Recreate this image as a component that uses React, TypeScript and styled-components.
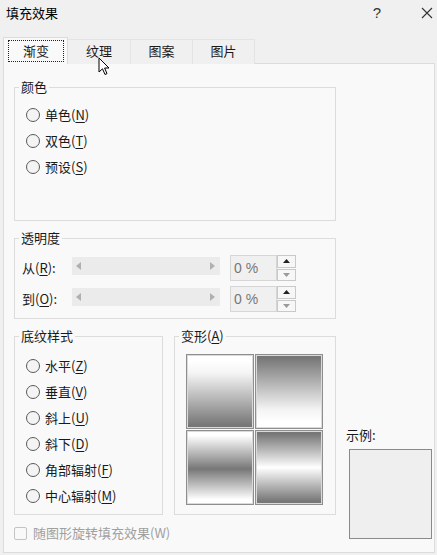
import React from 'react'
import styled, { createGlobalStyle } from 'styled-components'

const GlobalStyle = createGlobalStyle`
	html, body {
		margin: 0;
		background: #f0f0f0;
	}
	body {
		font-family: "Noto Sans CJK SC", "Liberation Sans", sans-serif;
		font-size: 13px;
		color: #1a1a1a;
	}
`

const Window = styled.div`
	position: relative;
	width: 437px;
	height: 555px;
	display: flex;
	flex-direction: column;
	box-sizing: border-box;
	padding: 0 2px 2px 3px;
	overflow: hidden;
`

const TitleBar = styled.div`
	flex-shrink: 0;
	height: 25px;
	display: flex;
	align-items: center;
	padding-left: 3px;
	margin-left: -3px;
	margin-right: -2px;
	line-height: 18px;

	.title {
		flex: 1;
		padding-left: 3px;
		color: #000;
	}
`

const TitleButton = styled.span<{ $gap?: number }>`
	width: 20px;
	height: 20px;
	display: flex;
	align-items: center;
	justify-content: center;
	margin-right: ${p => p.$gap ?? 0}px;
	font-family: "Liberation Sans", sans-serif;
	font-size: 15px;
	color: #333;
`

const TabStrip = styled.div`
	flex-shrink: 0;
	margin-top: 12px;
	height: 27px;
	display: flex;
	align-items: flex-end;
	position: relative;
	z-index: 1;
`

const Tab = styled.div<{ $width: number; $active?: boolean }>`
	box-sizing: border-box;
	width: ${p => p.$width}px;
	height: ${p => (p.$active ? 27 : 25)}px;
	display: flex;
	align-items: stretch;
	background: ${p => (p.$active ? '#f9f9f9' : '#f0f0f0')};
	border: 1px solid ${p => (p.$active ? '#dcdcdc' : '#e4e4e4')};
	border-bottom: none;
	border-left: ${p => (p.$active ? '1px solid #dcdcdc' : 'none')};
	padding: ${p => (p.$active ? '2px 3px 2px 4px' : '0 0 1px')};
	line-height: 18px;
`

const TabLabel = styled.span<{ $focus?: boolean }>`
	flex: 1;
	display: flex;
	align-items: center;
	justify-content: center;
	border: 1px dotted ${p => (p.$focus ? '#222' : 'transparent')};
	padding-bottom: 1px;
`

const Panel = styled.div`
	flex: 1;
	min-height: 0;
	margin-top: -1px;
	box-sizing: border-box;
	background: #f9f9f9;
	border: 1px solid #dcdcdc;
	display: grid;
	grid-template-columns: 322px 86px;
	column-gap: 10px;
	padding: 14px 0 0 10px;
`

const LeftColumn = styled.div`
	display: flex;
	flex-direction: column;
`

const Group = styled.fieldset<{ $width: number; $height: number }>`
	box-sizing: border-box;
	width: ${p => p.$width}px;
	height: ${p => p.$height}px;
	margin: 0;
	padding: 0;
	border: 1px solid #dcdcdc;
	min-width: 0;

	legend {
		margin-left: 4px;
		padding: 0 2px;
		line-height: 18px;
	}
`

const GroupBody = styled.div<{ $pad: string }>`
	padding: ${p => p.$pad};
	display: flex;
	flex-direction: column;
`

const RadioRow = styled.label`
	height: 26px;
	display: flex;
	align-items: center;
	gap: 5px;
	line-height: 18px;
`

const RadioCircle = styled.span`
	box-sizing: border-box;
	width: 14px;
	height: 14px;
	border-radius: 50%;
	border: 1px solid #5a5a5a;
	background: #f4f4f4;
`

const Key = styled.u`
	text-underline-offset: 2px;
`

const TransRows = styled.div`
	display: grid;
	grid-template-columns: 50px 148px 76px;
	grid-auto-rows: 28px;
	row-gap: 3px;
	align-items: center;

	> :nth-child(3n) {
		margin-left: 10px;
	}
`

const RowLabel = styled.span`
	line-height: 18px;
	padding-top: 2px;
`

const Track = styled.div`
	height: 18px;
	background: #ebebeb;
	display: flex;
	align-items: center;
	justify-content: space-between;
	padding: 0 5px 0 4px;
	margin-top: -3px;
`

const Spin = styled.div`
	height: 26px;
	display: flex;
	margin-top: 2px;
`

const SpinValue = styled.div`
	flex: 1;
	border: 1px solid #d6d6d6;
	background: #f0f0f0;
	display: flex;
	align-items: center;
	padding-left: 3px;
	font-family: "Liberation Sans", sans-serif;
	font-size: 14px;
	color: #777;
`

const SpinButtons = styled.div`
	width: 19px;
	display: flex;
	flex-direction: column;
	gap: 1px;
`

const SpinButton = styled.div`
	flex: 1;
	border: 1px solid #c9c9c9;
	background: #f7f7f7;
	display: flex;
	align-items: center;
	justify-content: center;
`

const BottomRow = styled.div`
	display: flex;
	gap: 11px;
	margin-top: 8px;
`

const TileGrid = styled.div`
	display: grid;
	grid-template-columns: 68px 68px;
	grid-template-rows: 75px 75px;
	gap: 1px;
`

const Tile = styled.div<{ $gradient: string }>`
	box-sizing: border-box;
	border: 1px solid #8e8e8e;
	box-shadow: inset 0 0 0 1px #dadada;
	background: ${p => p.$gradient};
`

const CheckRow = styled.label`
	margin-top: 9px;
	display: flex;
	align-items: center;
	gap: 6px;
	color: #a0a0a0;
	line-height: 18px;
`

const CheckBox = styled.span`
	box-sizing: border-box;
	width: 13px;
	height: 13px;
	border: 1px solid #c4c4c4;
	border-radius: 2px;
	background: #f9f9f9;
`

const RightColumn = styled.div`
	display: flex;
	flex-direction: column;
	justify-content: flex-end;
	line-height: 18px;
	padding-bottom: 13px;
`

const Sample = styled.div`
	margin: 5px 0 0 3px;
	width: 83px;
	height: 90px;
	box-sizing: border-box;
	border: 1px solid #8a8a8a;
	background: #efefef;
`

const Cursor = styled.svg`
	position: absolute;
	left: 98px;
	top: 57px;
	z-index: 5;
`

const Arrow = ({ dir, color }: { dir: 'left' | 'right' | 'up' | 'down'; color: string }) => {
	const paths = {
		left: 'M5 0 L5 8 L0 4 Z',
		right: 'M0 0 L0 8 L5 4 Z',
		up: 'M0 4 L7 4 L3.5 0 Z',
		down: 'M0 0 L7 0 L3.5 4 Z'
	}
	const horizontal = dir === 'left' || dir === 'right'
	return (
		<svg width={horizontal ? 5 : 7} height={horizontal ? 8 : 4} viewBox={horizontal ? '0 0 5 8' : '0 0 7 4'}>
			<path d={paths[dir]} fill={color} />
		</svg>
	)
}

const Radio = ({ label, k }: { label: string; k: string }) => (
	<RadioRow>
		<RadioCircle />
		<span>{label}(<Key>{k}</Key>)</span>
	</RadioRow>
)

const SpinField = () => (
	<Spin>
		<SpinValue>0 %</SpinValue>
		<SpinButtons>
			<SpinButton><Arrow dir='up' color='#222' /></SpinButton>
			<SpinButton><Arrow dir='down' color='#9a9a9a' /></SpinButton>
		</SpinButtons>
	</Spin>
)

const SliderTrack = () => (
	<Track>
		<Arrow dir='left' color='#b0b0b0' />
		<Arrow dir='right' color='#b0b0b0' />
	</Track>
)

const gray = '#777'
const tiles = [
	`linear-gradient(#fff 8%, #f4f4f4 25%, ${gray} 96%)`,
	`linear-gradient(${gray} 4%, #f4f4f4 75%, #fff 92%)`,
	`linear-gradient(#fff 6%, ${gray} 52%, #fff 94%)`,
	`linear-gradient(${gray} 4%, #fff 50%, ${gray} 96%)`
]

export default function App() {
	return (
		<Window>
			<GlobalStyle />
			<TitleBar>
				<span className='title'>填充效果</span>
				<TitleButton $gap={30}>?</TitleButton>
				<TitleButton>
					<svg width='12' height='12' viewBox='0 0 12 12'>
						<path d='M1 1 L11 11 M11 1 L1 11' stroke='#333' strokeWidth='1.1' />
					</svg>
				</TitleButton>
			</TitleBar>

			<TabStrip>
				<Tab $width={65} $active><TabLabel $focus>渐变</TabLabel></Tab>
				<Tab $width={63}><TabLabel>纹理</TabLabel></Tab>
				<Tab $width={62}><TabLabel>图案</TabLabel></Tab>
				<Tab $width={62}><TabLabel>图片</TabLabel></Tab>
			</TabStrip>

			<Panel>
				<LeftColumn>
					<Group $width={322} $height={143}>
						<legend>颜色</legend>
						<GroupBody $pad='6px 0 0 11px'>
							<Radio label='单色' k='N' />
							<Radio label='双色' k='T' />
							<Radio label='预设' k='S' />
						</GroupBody>
					</Group>

					<Group $width={322} $height={90} style={{ marginTop: 8 }}>
						<legend>透明度</legend>
						<GroupBody $pad='6px 0 0 7px'>
							<TransRows>
								<RowLabel>从(<Key>R</Key>):</RowLabel>
								<SliderTrack />
								<SpinField />
								<RowLabel>到(<Key>O</Key>):</RowLabel>
								<SliderTrack />
								<SpinField />
							</TransRows>
						</GroupBody>
					</Group>

					<BottomRow>
						<Group $width={149} $height={188}>
							<legend>底纹样式</legend>
							<GroupBody $pad='8px 0 0 11px'>
								<Radio label='水平' k='Z' />
								<Radio label='垂直' k='V' />
								<Radio label='斜上' k='U' />
								<Radio label='斜下' k='D' />
								<Radio label='角部辐射' k='F' />
								<Radio label='中心辐射' k='M' />
							</GroupBody>
						</Group>
						<Group $width={162} $height={188}>
							<legend>变形(<Key>A</Key>)</legend>
							<GroupBody $pad='9px 0 0 11px'>
								<TileGrid>
									{tiles.map((g, i) => <Tile key={i} $gradient={g} />)}
								</TileGrid>
							</GroupBody>
						</Group>
					</BottomRow>

					<CheckRow>
						<CheckBox />
						<span>随图形旋转填充效果(W)</span>
					</CheckRow>
				</LeftColumn>

				<RightColumn>
					<span>示例:</span>
					<Sample />
				</RightColumn>
			</Panel>

			<Cursor width='13' height='20' viewBox='0 0 13 20'>
				<path d='M1 1 L1 15 L4.5 11.8 L7 17.5 L9 16.6 L6.6 11 L11 11 Z' fill='#fff' stroke='#000' strokeWidth='1' strokeLinejoin='round' />
			</Cursor>
		</Window>
	)
}
